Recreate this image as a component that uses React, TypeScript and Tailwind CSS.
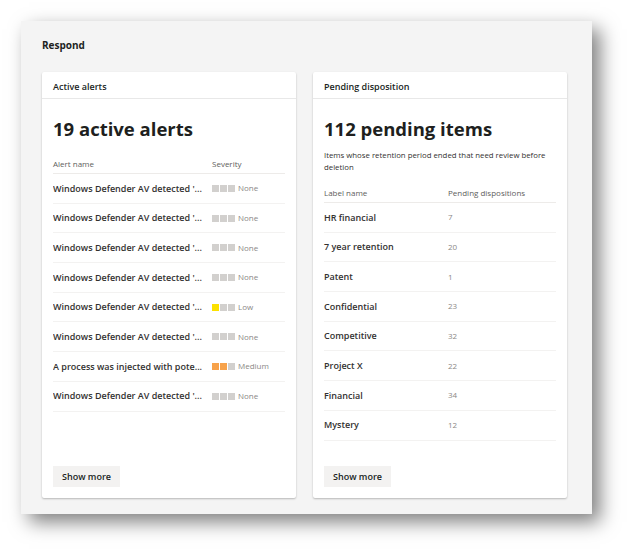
const alerts = [
  { name: "Windows Defender AV detected '...", level: "None" },
  { name: "Windows Defender AV detected '...", level: "None" },
  { name: "Windows Defender AV detected '...", level: "None" },
  { name: "Windows Defender AV detected '...", level: "None" },
  { name: "Windows Defender AV detected '...", level: "Low" },
  { name: "Windows Defender AV detected '...", level: "None" },
  { name: "A process was injected with pote...", level: "Medium" },
  { name: "Windows Defender AV detected '...", level: "None" },
];

const labels = [
  { name: "HR financial", count: 7 },
  { name: "7 year retention", count: 20 },
  { name: "Patent", count: 1 },
  { name: "Confidential", count: 23 },
  { name: "Competitive", count: 32 },
  { name: "Project X", count: 22 },
  { name: "Financial", count: 34 },
  { name: "Mystery", count: 12 },
];

const SeverityBars = ({ level }: { level: string }) => {
  const filled = level === "Low" ? 1 : level === "Medium" ? 2 : 0;
  const color = level === "Low" ? "bg-[#fce100]" : "bg-[#f7a24b]";
  return (
    <div className="flex gap-[1px]">
      {[0, 1, 2].map((i) => (
        <span
          key={i}
          className={i < filled ? `w-[7px] h-[7px] ${color}` : "w-[7px] h-[7px] bg-[#d2d0ce]"}
        />
      ))}
    </div>
  );
};

const Card = ({ title, children }: { title: string; children: React.ReactNode }) => (
  <div className="w-[254px] h-[426px] bg-white rounded-[2px] shadow-[0_1px_2px_rgba(0,0,0,0.25)] flex flex-col">
    <div className="h-[27px] flex items-center pt-[3px] px-[11px] border-b border-[#e8e8e8] text-[9px] font-semibold text-[#201f1e]">
      {title}
    </div>
    <div className="flex-1 flex flex-col px-[11px] pb-[11px]">{children}</div>
  </div>
);

const ShowMore = () => (
  <button className="mt-auto self-start h-[21px] px-[9px] bg-[#f3f2f1] text-[9px] font-semibold text-[#201f1e]">
    Show more
  </button>
);

export default function App() {
  return (
    <div
      className="w-[634px] h-[556px] bg-white pt-[21px] pl-[21px]"
      style={{ fontFamily: '"Open Sans", "Noto Sans", sans-serif' }}
    >
      <div className="w-[571px] h-[493px] bg-[#f4f4f4] shadow-[8px_8px_18px_rgba(0,0,0,0.5)] px-[21px] pt-[17px]">
        <div className="text-[10px] leading-[14px] font-bold text-[#201f1e]">Respond</div>

        <div className="mt-[20px] flex gap-[17px]">
          <Card title="Active alerts">
            <div className="mt-[18px] text-[18.5px] leading-[24px] font-bold text-[#201f1e]">19 active alerts</div>
            <div className="mt-[14px] h-[19px] flex items-center text-[8px] text-[#605e5c] border-b border-[#edebe9]">
              <span className="w-[159px]">Alert name</span>
              <span>Severity</span>
            </div>
            {alerts.map((a, i) => (
              <div key={i} className="h-[29.7px] flex items-center border-b border-[#f3f2f1]">
                <span className="w-[159px] text-[9px] font-semibold text-[#323130] whitespace-nowrap overflow-hidden">
                  {a.name}
                </span>
                <SeverityBars level={a.level} />
                <span className="ml-[3px] text-[8px] text-[#8a8886]">{a.level}</span>
              </div>
            ))}
            <ShowMore />
          </Card>

          <Card title="Pending disposition">
            <div className="mt-[18px] text-[18.5px] leading-[24px] font-bold text-[#201f1e]">112 pending items</div>
            <p className="mt-[8px] text-[7.8px] leading-[12px] text-[#323130]">
              Items whose retention period ended that need review before deletion
            </p>
            <div className="mt-[10px] h-[20px] flex items-center text-[8px] text-[#605e5c] border-b border-[#edebe9]">
              <span className="w-[124px]">Label name</span>
              <span>Pending dispositions</span>
            </div>
            {labels.map((l) => (
              <div key={l.name} className="h-[29.7px] flex items-center border-b border-[#f3f2f1]">
                <span className="w-[124px] text-[9px] font-semibold text-[#323130]">{l.name}</span>
                <span className="text-[8px] text-[#8a8886]">{l.count}</span>
              </div>
            ))}
            <ShowMore />
          </Card>
        </div>
      </div>
    </div>
  );
}
